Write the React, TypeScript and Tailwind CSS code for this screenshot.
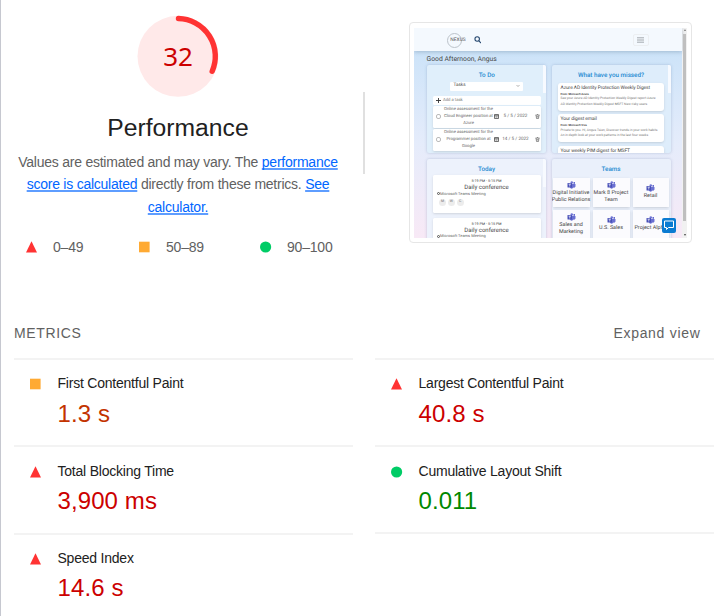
import type { ReactNode } from "react";

type Rating = "fail" | "average" | "pass";

function Marker({ rating }: { rating: Rating }) {
  return (
    <svg className="h-[12px] w-[12px] shrink-0" viewBox="0 0 12 12">
      {rating === "fail" && <path d="M5.5 0.2 L11 11.6 H0 Z" fill="#ff3333" />}
      {rating === "average" && <rect x="0" y="0.7" width="10.6" height="10.6" fill="#ffaa33" />}
      {rating === "pass" && <circle cx="5.6" cy="6" r="5.6" fill="#00cc66" />}
    </svg>
  );
}

const valueColor: Record<Rating, string> = {
  fail: "text-[#cc0000]",
  average: "text-[#c33300]",
  pass: "text-[#008800]",
};

function Metric({ rating, title, value }: { rating: Rating; title: string; value: string }) {
  return (
    <div className="flex h-[87.3px] border-t-2 border-[#f3f3f3] pl-[16px] pt-[13.3px]">
      <div className="w-[27.5px] pt-[5px]">
        <Marker rating={rating} />
      </div>
      <div>
        <div className="h-[20px] text-[14px] leading-[20px] tracking-[-0.22px] text-[#212121]">{title}</div>
        <div className={"mt-[4.3px] text-[24px] leading-[32px] tracking-[0.1px] " + valueColor[rating]}>{value}</div>
      </div>
    </div>
  );
}

function Gauge() {
  return (
    <div className="relative h-[82px] w-[82px]">
      <svg className="h-[82px] w-[82px]" viewBox="0 0 82 82">
        <circle cx="41" cy="41.3" r="40.5" fill="#ffe9e9" />
        <path d="M41.5 3.5 A37.8 37.8 0 0 1 75.2 56.3" fill="none" stroke="#ff3333" strokeWidth="5.4" strokeLinecap="round" />
      </svg>
      <div className="absolute inset-0 flex items-center justify-center pb-px font-['Noto_Sans',sans-serif] text-[26px] leading-none text-[#cc0000]">
        32
      </div>
    </div>
  );
}

function Link({ children }: { children: ReactNode }) {
  return <a className="text-[#0066ff] underline decoration-[#5e9dff] decoration-[1.5px] underline-offset-[1px] [text-decoration-skip-ink:none]">{children}</a>;
}

function Task({ lines, date }: { lines: string[]; date: string }) {
  return (
    <div className="mt-[1.5px] flex h-[21.5px] items-center rounded-[1.5px] bg-white px-[3px] text-[4.2px] leading-[7px] text-[#666] shadow-sm">
      <span className="h-[5px] w-[5px] shrink-0 rounded-[2px] border border-[#bbb]" />
      <div className="ml-[3px] w-[50px] shrink-0 whitespace-nowrap text-center">
        {lines.map((l) => (
          <div key={l}>{l}</div>
        ))}
      </div>
      <svg className="ml-[0.5px] h-[5px] w-[5px] shrink-0" viewBox="0 0 10 10" fill="none" stroke="#444" strokeWidth="1.5">
        <path d="M1 1H9V9H1ZM1 3.5H9M3 6H7" />
      </svg>
      <span className="ml-[3px] w-[27px] shrink-0 whitespace-nowrap text-center text-[4.6px]">{date}</span>
      <svg className="ml-[6px] h-[5px] w-[5px] shrink-0" viewBox="0 0 10 10" fill="none" stroke="#555" strokeWidth="1.2">
        <path d="M1 2H9M2 2L3 9H7L8 2M4 1H6M4 4V7M6 4V7" />
      </svg>
    </div>
  );
}

function Digest({ title, from, lines }: { title: string; from: string; lines: string[] }) {
  return (
    <div className="mb-[3.5px] h-[28px] w-[106px] shrink-0 overflow-hidden whitespace-nowrap rounded-[3px] bg-white pl-[2.5px] pt-[2px] shadow-sm">
      <div className="text-[4.9px] leading-[7px] tracking-[-0.08px]">{title}</div>
      <div className="text-[2.8px] font-bold leading-[4px]">{from}</div>
      <div className="mt-[0.5px] text-[3.3px] leading-[5.5px] text-[#777]">
        {lines.map((l) => (
          <div key={l}>{l}</div>
        ))}
      </div>
    </div>
  );
}

function Conference({ attendees = [] }: { attendees?: string[] }) {
  return (
    <div className="mb-[5px] h-[37.5px] w-[108px] shrink-0 rounded-[1.5px] bg-white px-[4px] pt-[3px] shadow-sm">
      <div className="text-center text-[3.7px] leading-[6px]">5:19 PM - 5:15 PM</div>
      <div className="text-center text-[6px] leading-[7.5px]">Daily conference</div>
      <div className="flex items-center gap-[0.5px] text-[4px] leading-[4px] text-[#666]">
        <span className="h-[3px] w-[3px] rounded-full border border-[#555]" />
        Microsoft Teams Meeting
      </div>
      <div className="mt-[3px] flex gap-[1.8px] pl-[2.5px]">
        {attendees.map((c) => (
          <span key={c} className="flex h-[7px] w-[7px] items-center justify-center rounded-full bg-[#ececec] text-[3.5px] text-[#777]">
            {c}
          </span>
        ))}
      </div>
    </div>
  );
}

function TeamsIcon() {
  return (
    <svg className="h-[8px] w-[9px]" viewBox="0 0 18 16">
      <circle cx="9.5" cy="3" r="2.5" fill="#7075d4" />
      <circle cx="14.5" cy="3.8" r="1.8" fill="#5059c9" />
      <path d="M6 6H17V11Q16 14 13 13Q11 16 8 15Q6 14 6 12Z" fill="#6a70d2" />
      <rect x="1" y="4" width="9" height="9" rx="1" fill="#4850b8" />
      <path d="M3 6.2H8M5.5 6.2V11" stroke="white" strokeWidth="1.3" />
    </svg>
  );
}

function TeamTile({ lines }: { lines: string[] }) {
  return (
    <div className="flex h-[29px] flex-col items-center justify-center whitespace-nowrap bg-[#fbfbfe] text-center text-[5.4px] leading-[7px] shadow-sm">
      <TeamsIcon />
      <div className="mt-[1px]">
        {lines.map((l) => (
          <div key={l}>{l}</div>
        ))}
      </div>
    </div>
  );
}

function Panel({ title, className, scroll, children }: { title: string; className: string; scroll?: boolean; children: ReactNode }) {
  return (
    <div className={"relative flex w-[119px] flex-col overflow-hidden rounded-[2px] shadow-[0_0_3px_rgba(70,100,150,0.3)] " + className}>
      <div className="text-center text-[6.3px] font-medium leading-[8px] text-[#1f8bd2]">{title}</div>
      {children}
      {scroll && <div className="absolute right-0 top-0 h-[28px] w-[3px] bg-[#f7faff]" />}
    </div>
  );
}

function PagePreview() {
  return (
    <div className="relative flex h-[210px] w-[273px] overflow-hidden bg-[#f1f1f1] font-[Roboto,'Open_Sans',sans-serif] text-[#444] [text-rendering:geometricPrecision]">
      <div className="h-[210px] w-[268px] bg-linear-to-b from-[#c6e1f8] via-[#e5ecfb] via-55% to-[#f8e9f6]">
        <div className="flex h-[23.5px] items-center bg-[#f4f9fe] pl-[32.5px] pt-[1.5px] shadow-[0_1px_4px_rgba(60,90,120,0.3)]">
          <span className="flex h-[15px] w-[15px] items-center justify-center whitespace-nowrap rounded-full border border-[#bcc3ca] pl-[8px] text-[4.9px] leading-[5px] text-[#555]">
            NEXUS
          </span>
          <svg className="ml-[12px] h-[7.5px] w-[7.5px]" viewBox="0 0 16 16" fill="none" stroke="#23466e" strokeWidth="2.3">
            <circle cx="6.8" cy="6.5" r="4.8" />
            <path d="M10.3 10.3L15 15" />
          </svg>
          <span className="ml-[151.5px] flex h-[12px] w-[16px] items-center justify-center rounded-[2px] border border-[#eceff2]">
            <svg className="h-[6px] w-[7px]" viewBox="0 0 7 6" stroke="#8f959b" strokeWidth="0.8">
              <path d="M0 0.8H7M0 3H7M0 5.2H7" />
            </svg>
          </span>
        </div>
        <div className="h-[13.5px] pl-[12.5px] pt-[3.8px] text-[6.8px] leading-[9px]">Good Afternoon, Angus</div>
        <div className="grid grid-cols-[119px_119px] gap-x-[6px] gap-y-[6px] pl-[12.5px]">
          <Panel title="To Do" className="h-[88px] bg-[#e0effb] pl-[6px] pr-[4.5px] pt-[6px]" scroll>
            <div className="ml-[17.5px] mt-[3px] flex h-[9px] w-[73px] shrink-0 items-center justify-between rounded-[1px] bg-white px-[3.5px] text-[4.6px]">
              Tasks
              <svg className="h-[2px] w-[4px]" viewBox="0 0 8 4" fill="none" stroke="#666">
                <path d="M1 0L4 3L7 0" />
              </svg>
            </div>
            <div className="mt-[5px] flex h-[9px] shrink-0 items-center gap-[2.5px] rounded-[1.5px] bg-white px-[3px] text-[4.2px] leading-[5px] text-[#777]">
              <svg className="h-[5px] w-[5px]" viewBox="0 0 10 10" stroke="#333" strokeWidth="1.8">
                <path d="M5 0V10M0 5H10" />
              </svg>
              Add a task
            </div>
            <Task lines={["Online assessment for the", "Cloud Engineer position at", "Azure"]} date="5 / 5 / 2022" />
            <Task lines={["Online assessment for the", "Programmer position at", "Google"]} date="14 / 5 / 2022" />
          </Panel>
          <Panel title="What have you missed?" className="h-[88px] items-center bg-[#deedfb] pt-[6px]" scroll>
            <div className="mt-[4px] flex flex-col">
              <Digest title="Azure AD Identity Protection Weekly Digest" from="From: Microsoft Azure" lines={["See your Azure AD Identity Protection Weekly Digest report Azure", "AD Identity Protection Weekly Digest MSFT New risky users"]} />
              <Digest title="Your digest email" from="From: Microsoft Viva" lines={["Private to you. Hi, Angus Tsien, Discover trends in your work habits", "An in-depth look at your work patterns in the last four weeks"]} />
              <Digest title="Your weekly PIM digest for MSFT" from="" lines={[]} />
            </div>
          </Panel>
          <Panel title="Today" className="h-[88px] bg-[#edf2fc] pl-[6px] pr-[5px] pt-[6px]" scroll>
            <div className="mt-[2.5px] flex flex-col">
              <Conference attendees={["M", "W", "C"]} />
              <Conference />
            </div>
          </Panel>
          <Panel title="Teams" className="h-[88px] bg-[#eaf0fb] pt-[6px]">
            <div className="mt-[5px] grid grid-cols-[37px_37px_36px] gap-[3px] pl-[1px]">
              <TeamTile lines={["Digital Initiative", "Public Relations"]} />
              <TeamTile lines={["Mark 8 Project", "Team"]} />
              <TeamTile lines={["Retail"]} />
              <TeamTile lines={["Sales and", "Marketing"]} />
              <TeamTile lines={["U.S. Sales"]} />
              <TeamTile lines={["Project Alpha"]} />
            </div>
          </Panel>
        </div>
      </div>
      <div className="flex w-[5px] flex-col items-center justify-between py-[1.5px]">
        <i className="border-x-[1.5px] border-b-[2px] border-x-transparent border-b-[#777]" />
        <i className="h-[187px] w-[3.5px] bg-[#bfbfbf]" />
        <i className="mt-[10px] border-x-[1.5px] border-t-[2px] border-x-transparent border-t-[#444]" />
      </div>
      <div className="absolute left-[248px] top-[190px] flex h-[15px] w-[14px] items-center justify-center rounded-[2px] bg-[#0b7bd1]">
        <svg className="h-[10px] w-[10px]" viewBox="0 0 20 20" fill="none" stroke="white" strokeWidth="2">
          <path d="M1 2H19V15H9L5 19V15H1Z" />
        </svg>
      </div>
    </div>
  );
}

export default function App() {
  return (
    <div className="h-[616px] w-[717px] overflow-hidden border-l border-[#c6c8d0] bg-white font-['Liberation_Sans',Arial,sans-serif]">
      <div className="flex h-[323px]">
        <div className="flex w-[354px] flex-col items-center pt-[15px]">
          <Gauge />
          <div className="mt-[15px] text-[24.7px] leading-[32px] text-[#212121]">Performance</div>
          <div className="mt-[7px] whitespace-nowrap text-center text-[14px] leading-[22.4px] tracking-[-0.24px] text-[#616161]">
            Values are estimated and may vary. The <Link>performance</Link>
            <br />
            <Link>score is calculated</Link> directly from these metrics. <Link>See</Link>
            <br />
            <Link>calculator.</Link>
          </div>
          <div className="mt-[18.5px] flex w-full pl-[25px] text-[14px] leading-[20px] tracking-[-0.2px] text-[#616161]">
            <div className="flex w-[113px] items-center gap-[15px]"><Marker rating="fail" />0–49</div>
            <div className="flex w-[121px] items-center gap-[15px]"><Marker rating="average" />50–89</div>
            <div className="flex items-center gap-[15px]"><Marker rating="pass" />90–100</div>
          </div>
        </div>
        <div className="ml-[8px] mt-[92px] h-[82px] w-[2px] bg-[#e0e0e0]" />
        <div className="ml-[44px] mt-[22px] h-[221px] w-[283px] rounded-[4px] border-[1.5px] border-[#e6e6e6] bg-white pl-[4px] pt-[4.5px]">
          <PagePreview />
        </div>
      </div>
      <div className="flex h-[35px] justify-between pl-[13px] pr-[16.5px] text-[14px] leading-[20px] text-[#616161]">
        <span className="tracking-[0.65px]">METRICS</span>
        <span className="tracking-[0.7px]">Expand view</span>
      </div>
      <div className="flex gap-[22px] pl-[13px]">
        <div className="w-[339px]">
          <Metric rating="average" title="First Contentful Paint" value="1.3 s" />
          <Metric rating="fail" title="Total Blocking Time" value="3,900 ms" />
          <Metric rating="fail" title="Speed Index" value="14.6 s" />
        </div>
        <div className="w-[339px]">
          <Metric rating="fail" title="Largest Contentful Paint" value="40.8 s" />
          <Metric rating="pass" title="Cumulative Layout Shift" value="0.011" />
          <div className="-mt-px border-t-2 border-[#f3f3f3]" />
        </div>
      </div>
    </div>
  );
}
